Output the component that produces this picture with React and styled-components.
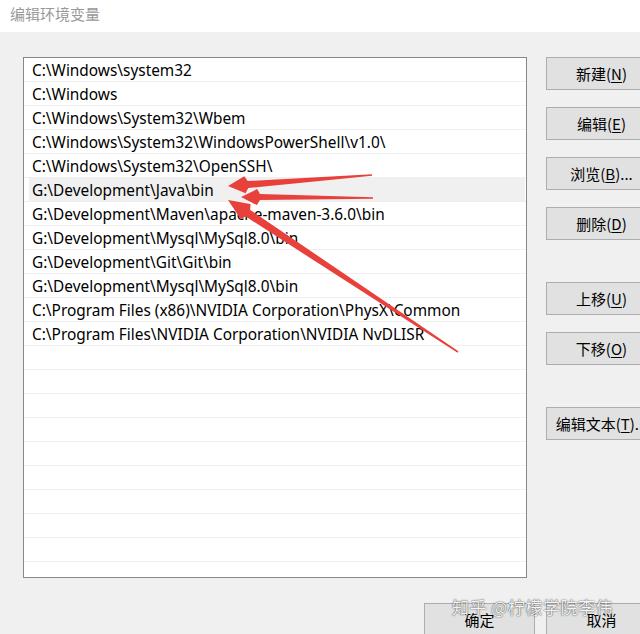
import React from 'react'
import styled, { createGlobalStyle } from 'styled-components'

const GlobalStyle = createGlobalStyle`
    html, body {
        margin: 0;
        padding: 0;
        background: #f0f0f0;
        overflow: hidden;
    }
`

const Window = styled.div`
    position: relative;
    width: 640px;
    height: 634px;
    overflow: hidden;
    background: #f0f0f0;
    font-family: "Noto Sans", "Noto Sans CJK SC", sans-serif;
`

const TitleBar = styled.div`
    height: 32px;
    line-height: 28px;
    background: #ffffff;
    padding-left: 10px;
    color: #999999;
    font-size: 15px;
    font-family: "Noto Sans CJK SC", sans-serif;
`

const Body = styled.div`
    padding: 25px 0 0 23px;
`

const Main = styled.div`
    display: flex;
    align-items: flex-start;
`

const ListBox = styled.div`
    flex: none;
    width: 502px;
    height: 519px;
    border: 1px solid #828790;
    background: #ffffff;
    overflow: hidden;
`

const Row = styled.div`
    height: 23px;
    border-bottom: 1px solid #efefef;
    display: flex;
`

const Cell = styled.div`
    flex: 1;
    margin: 0 1px 0 5px;
    padding: 2px 0 0 3px;
    display: flex;
    align-items: center;
    font-size: 15.4px;
    color: #000000;
    white-space: nowrap;
    background: ${p => (p.$selected ? '#f0f0f0' : 'transparent')};
`

const Side = styled.div`
    flex: none;
    margin-left: 19px;
    display: flex;
    flex-direction: column;
`

const Button = styled.div`
    box-sizing: border-box;
    width: 111px;
    height: 33px;
    flex: none;
    border: 1px solid #adadad;
    background: #e1e1e1;
    display: flex;
    align-items: center;
    justify-content: center;
    font-size: 15px;
    color: #000000;
    white-space: nowrap;
    margin-top: ${p => p.$gap || 0}px;
    font-family: "Noto Sans CJK SC", sans-serif;
    u {
        text-decoration: underline;
        text-underline-offset: 2px;
    }
`

const Footer = styled.div`
    display: flex;
    justify-content: flex-end;
    gap: 11px;
    margin-top: 25px;
    width: 634px;
`

const Watermark = styled.div`
    position: absolute;
    left: 452px;
    top: 594px;
    font-size: 17px;
    font-family: "Noto Sans CJK SC", sans-serif;
    color: rgba(255, 255, 255, 0.95);
    text-shadow: 0 0 1px rgba(0, 0, 0, 0.7), 0 0 2px rgba(0, 0, 0, 0.4);
    letter-spacing: 0.5px;
    white-space: nowrap;
`

const Overlay = styled.svg`
    position: absolute;
    left: 0;
    top: 0;
    pointer-events: none;
`

const paths = [
    'C:\\Windows\\system32',
    'C:\\Windows',
    'C:\\Windows\\System32\\Wbem',
    'C:\\Windows\\System32\\WindowsPowerShell\\v1.0\\',
    'C:\\Windows\\System32\\OpenSSH\\',
    'G:\\Development\\Java\\bin',
    'G:\\Development\\Maven\\apache-maven-3.6.0\\bin',
    'G:\\Development\\Mysql\\MySql8.0\\bin',
    'G:\\Development\\Git\\Git\\bin',
    'G:\\Development\\Mysql\\MySql8.0\\bin',
    'C:\\Program Files (x86)\\NVIDIA Corporation\\PhysX\\Common',
    'C:\\Program Files\\NVIDIA Corporation\\NVIDIA NvDLISR',
]

const rows = [...paths, ...Array(10).fill('')]

// arrow: tail -> tip, head length, head width, shaft width at head
const arrows = [
    { from: [372, 175], to: [228, 186], head: 20, wide: 17, shaft: 7 },
    { from: [373, 198], to: [241, 197], head: 19, wide: 16, shaft: 6 },
    { from: [458, 352], to: [228, 200], head: 24, wide: 18, shaft: 8 },
]

const arrowPoints = ({ from, to, head, wide, shaft }) => {
    const dx = to[0] - from[0]
    const dy = to[1] - from[1]
    const len = Math.hypot(dx, dy)
    const ux = dx / len
    const uy = dy / len
    const nx = -uy
    const ny = ux
    const bx = to[0] - ux * head
    const by = to[1] - uy * head
    const pts = [
        [from[0] + nx * 0.8, from[1] + ny * 0.8],
        [bx + nx * shaft / 2, by + ny * shaft / 2],
        [bx + nx * wide / 2 + ux * 3, by + ny * wide / 2 + uy * 3],
        to,
        [bx - nx * wide / 2 + ux * 3, by - ny * wide / 2 + uy * 3],
        [bx - nx * shaft / 2, by - ny * shaft / 2],
        [from[0] - nx * 0.8, from[1] - ny * 0.8],
    ]
    return pts.map(p => p.map(v => v.toFixed(1)).join(',')).join(' ')
}

const sideButtons = [
    { label: '新建', key: 'N', gap: 0 },
    { label: '编辑', key: 'E', gap: 17 },
    { label: '浏览', key: 'B', gap: 17, tail: '...' },
    { label: '删除', key: 'D', gap: 17 },
    { label: '上移', key: 'U', gap: 42 },
    { label: '下移', key: 'O', gap: 17 },
    { label: '编辑文本', key: 'T', gap: 42, tail: '...' },
]

export default function App() {
    return (
        <Window>
            <GlobalStyle />
            <TitleBar>编辑环境变量</TitleBar>
            <Body>
                <Main>
                    <ListBox>
                        {rows.map((text, i) => (
                            <Row key={i}>
                                <Cell $selected={i === 5}>{text}</Cell>
                            </Row>
                        ))}
                    </ListBox>
                    <Side>
                        {sideButtons.map(b => (
                            <Button key={b.key} $gap={b.gap}>
                                {b.label}(<u>{b.key}</u>){b.tail}
                            </Button>
                        ))}
                    </Side>
                </Main>
                <Footer>
                    <Button>确定</Button>
                    <Button>取消</Button>
                </Footer>
            </Body>
            <Watermark>知乎 @柠檬学院李伟</Watermark>
            <Overlay width="640" height="634" viewBox="0 0 640 634">
                {arrows.map((a, i) => (
                    <polygon key={i} points={arrowPoints(a)} fill="#e8413c" />
                ))}
            </Overlay>
        </Window>
    )
}
